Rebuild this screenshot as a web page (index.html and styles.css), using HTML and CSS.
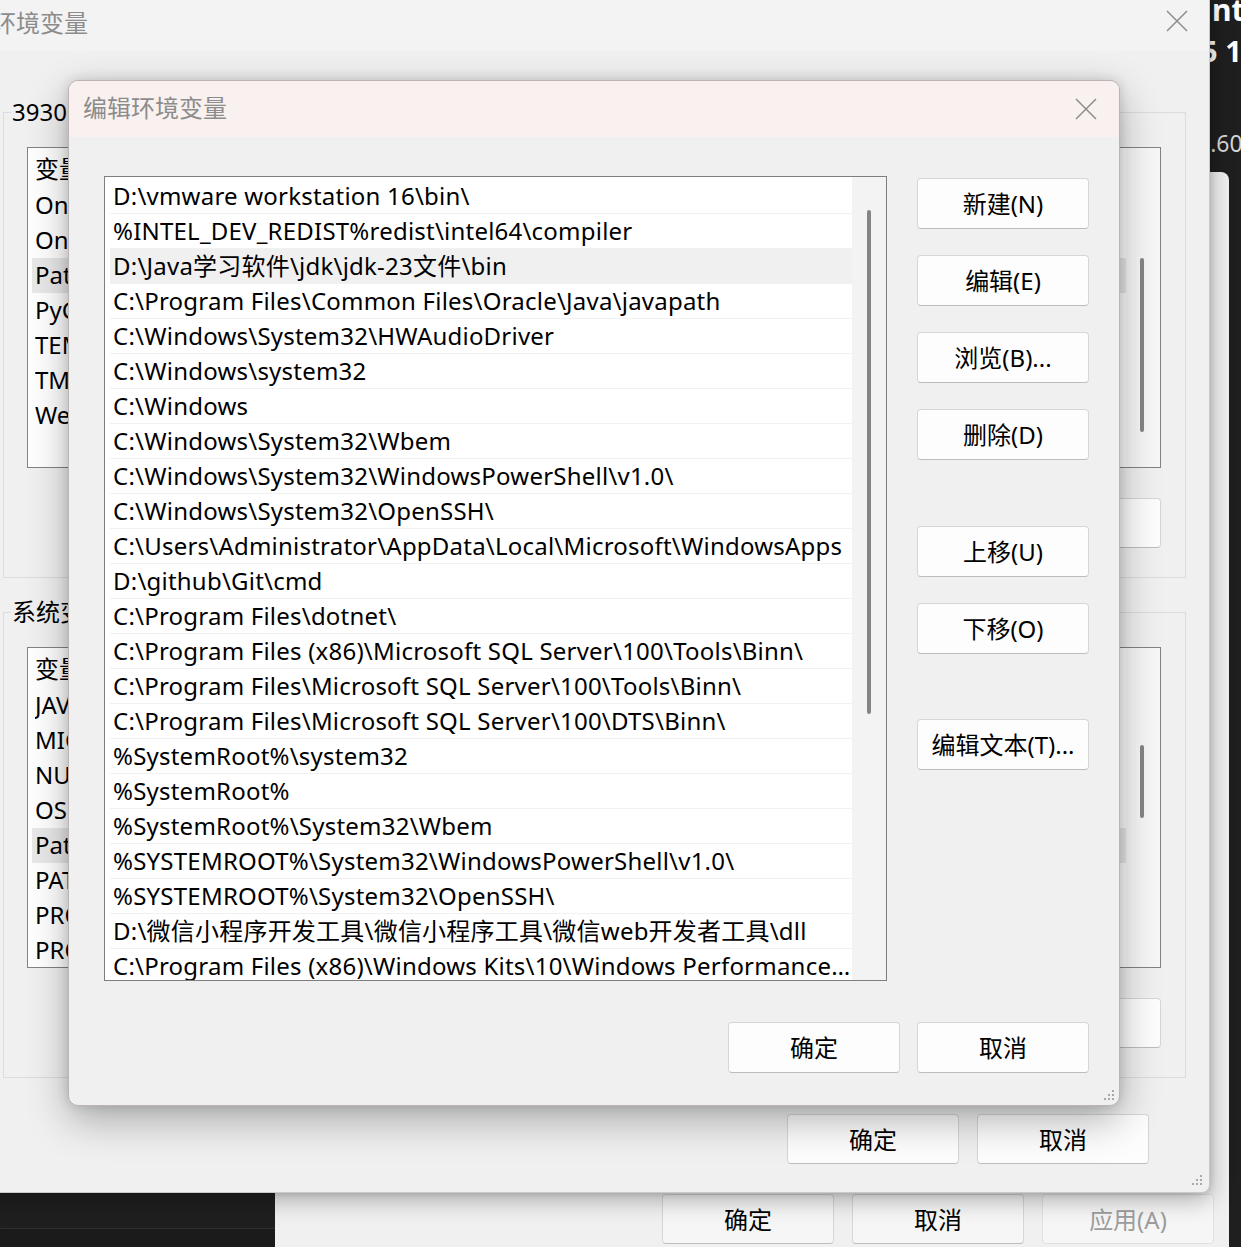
FILE: index.html
```html
<!DOCTYPE html>
<html lang="zh-CN">
<head>
<meta charset="utf-8">
<title>编辑环境变量</title>
<link rel="stylesheet" href="styles.css">
</head>
<body>
<div class="desktop">
  <div class="dark-app">
    <div class="dk-l1">nt</div>
    <div class="dk-l2">5 1</div>
    <div class="dk-l3">3.60</div>
  </div>
  <div class="dark-strip"></div>

  <div class="win-back">
    <div class="btn-row back-row">
      <div class="btn">确定</div>
      <div class="btn">取消</div>
      <div class="btn disabled">应用(A)</div>
    </div>
  </div>

  <div class="win-env">
    <div class="env-title">
      <span class="title-text">环境变量</span>
      <svg class="close" width="22" height="22" viewBox="0 0 22 22"><path d="M1 1L21 21M21 1L1 21" stroke="#8c8c8c" stroke-width="1.5" fill="none"/></svg>
    </div>
    <div class="env-body">
      <div class="group">
        <div class="group-label">3930 的用户变量(U)</div>
        <div class="vlist">
          <div class="vrows">
            <div class="vhead"><span class="vname">变量</span><span class="vval">值</span></div>
            <div class="vrow"><span class="vname">OneDrive</span><span class="vval">C:\Users\3930\OneDrive</span></div>
            <div class="vrow"><span class="vname">OneDriveConsumer</span><span class="vval">C:\Users\3930\OneDrive</span></div>
            <div class="vrow sel"><span class="vname">Path</span><span class="vval">C:\Users\3930\AppData\Local\Microsoft\WindowsApps;</span></div>
            <div class="vrow"><span class="vname">PyCharm Community Edition</span><span class="vval">D:\PyCharm\bin;</span></div>
            <div class="vrow"><span class="vname">TEMP</span><span class="vval">C:\Users\3930\AppData\Local\Temp</span></div>
            <div class="vrow"><span class="vname">TMP</span><span class="vval">C:\Users\3930\AppData\Local\Temp</span></div>
            <div class="vrow"><span class="vname">WebStorm</span><span class="vval">D:\WebStorm\bin;</span></div>
          </div>
          <div class="vscroll"><div class="vthumb thumb-u"></div></div>
        </div>
        <div class="btn-row group-row">
          <div class="btn">新建(N)...</div>
          <div class="btn">编辑(E)...</div>
          <div class="btn">删除(D)</div>
        </div>
      </div>

      <div class="group group-sys">
        <div class="group-label">系统变量(S)</div>
        <div class="vlist">
          <div class="vrows">
            <div class="vhead"><span class="vname">变量</span><span class="vval">值</span></div>
            <div class="vrow"><span class="vname">JAVA_HOME</span><span class="vval">D:\Java\jdk-23</span></div>
            <div class="vrow"><span class="vname">MIC_LD_LIBRARY_PATH</span><span class="vval">%INTEL_DEV_REDIST%compiler\lib\mic</span></div>
            <div class="vrow"><span class="vname">NUMBER_OF_PROCESSORS</span><span class="vval">16</span></div>
            <div class="vrow"><span class="vname">OS</span><span class="vval">Windows_NT</span></div>
            <div class="vrow sel"><span class="vname">Path</span><span class="vval">D:\vmware workstation 16\bin\;</span></div>
            <div class="vrow"><span class="vname">PATHEXT</span><span class="vval">.COM;.EXE;.BAT;.CMD;.VBS;.JS</span></div>
            <div class="vrow"><span class="vname">PROCESSOR_ARCHITECTURE</span><span class="vval">AMD64</span></div>
            <div class="vrow"><span class="vname">PROCESSOR_IDENTIFIER</span><span class="vval">Intel64 Family 6</span></div>
          </div>
          <div class="vscroll"><div class="vthumb thumb-s"></div></div>
        </div>
        <div class="btn-row group-row">
          <div class="btn">新建(W)...</div>
          <div class="btn">编辑(I)...</div>
          <div class="btn">删除(L)</div>
        </div>
      </div>

      <div class="btn-row env-foot">
        <div class="btn">确定</div>
        <div class="btn">取消</div>
      </div>
    </div>
    <svg class="grip" width="14" height="14" viewBox="0 0 14 14"><g fill="#a8a8a8"><rect x="11" y="3" width="2" height="2"/><rect x="7" y="7" width="2" height="2"/><rect x="11" y="7" width="2" height="2"/><rect x="3" y="11" width="2" height="2"/><rect x="7" y="11" width="2" height="2"/><rect x="11" y="11" width="2" height="2"/></g></svg>
  </div>

  <div class="dlg">
    <div class="dlg-title">
      <span class="title-text">编辑环境变量</span>
      <svg class="close dlg-close" width="22" height="22" viewBox="0 0 22 22"><path d="M1 1L21 21M21 1L1 21" stroke="#8c8c8c" stroke-width="1.5" fill="none"/></svg>
    </div>
    <div class="dlg-body">
      <div class="dlg-main">
        <div class="plist">
          <div class="prows">
            <div class="prow">D:\vmware workstation 16\bin\</div>
            <div class="prow">%INTEL_DEV_REDIST%redist\intel64\compiler</div>
            <div class="prow sel">D:\Java学习软件\jdk\jdk-23文件\bin</div>
            <div class="prow">C:\Program Files\Common Files\Oracle\Java\javapath</div>
            <div class="prow">C:\Windows\System32\HWAudioDriver</div>
            <div class="prow">C:\Windows\system32</div>
            <div class="prow">C:\Windows</div>
            <div class="prow">C:\Windows\System32\Wbem</div>
            <div class="prow">C:\Windows\System32\WindowsPowerShell\v1.0\</div>
            <div class="prow">C:\Windows\System32\OpenSSH\</div>
            <div class="prow">C:\Users\Administrator\AppData\Local\Microsoft\WindowsApps</div>
            <div class="prow">D:\github\Git\cmd</div>
            <div class="prow">C:\Program Files\dotnet\</div>
            <div class="prow">C:\Program Files (x86)\Microsoft SQL Server\100\Tools\Binn\</div>
            <div class="prow">C:\Program Files\Microsoft SQL Server\100\Tools\Binn\</div>
            <div class="prow">C:\Program Files\Microsoft SQL Server\100\DTS\Binn\</div>
            <div class="prow">%SystemRoot%\system32</div>
            <div class="prow">%SystemRoot%</div>
            <div class="prow">%SystemRoot%\System32\Wbem</div>
            <div class="prow">%SYSTEMROOT%\System32\WindowsPowerShell\v1.0\</div>
            <div class="prow">%SYSTEMROOT%\System32\OpenSSH\</div>
            <div class="prow">D:\微信小程序开发工具\微信小程序工具\微信web开发者工具\dll</div>
            <div class="prow">C:\Program Files (x86)\Windows Kits\10\Windows Performance Toolkit\</div>
          </div>
          <div class="pscroll"><div class="pthumb"></div></div>
        </div>
        <div class="side-btns">
          <div class="btn">新建(N)</div>
          <div class="btn">编辑(E)</div>
          <div class="btn">浏览(B)...</div>
          <div class="btn">删除(D)</div>
          <div class="btn gap-big">上移(U)</div>
          <div class="btn">下移(O)</div>
          <div class="btn gap-big2">编辑文本(T)...</div>
        </div>
      </div>
      <div class="btn-row dlg-foot">
        <div class="btn">确定</div>
        <div class="btn">取消</div>
      </div>
    </div>
    <svg class="grip dlg-grip" width="14" height="14" viewBox="0 0 14 14"><g fill="#a8a8a8"><rect x="11" y="3" width="2" height="2"/><rect x="7" y="7" width="2" height="2"/><rect x="11" y="7" width="2" height="2"/><rect x="3" y="11" width="2" height="2"/><rect x="7" y="11" width="2" height="2"/><rect x="11" y="11" width="2" height="2"/></g></svg>
  </div>
</div>
</body>
</html>
```
FILE: styles.css
```css
* { box-sizing: border-box; }
html, body { margin: 0; padding: 0; }
body {
  width: 1241px;
  height: 1247px;
  overflow: hidden;
  background: #1f1f1f;
  font-family: "Noto Sans", "Noto Sans CJK SC", sans-serif;
  font-size: 24px;
  color: #000;
}
.desktop {
  position: relative;
  width: 1241px;
  height: 1247px;
  overflow: hidden;
  background: #1f1f1f;
}

/* dark application behind */
.dark-app {
  position: absolute;
  left: 1195px;
  top: 0;
  width: 46px;
  height: 172px;
  display: flex;
  flex-direction: column;
  color: #fff;
  white-space: nowrap;
}
.dk-l1 { font-size: 30px; font-weight: 700; line-height: 30px; margin-top: -5px; padding-left: 17px; }
.dk-l2 { font-size: 29px; font-weight: 700; line-height: 30px; margin-top: 11px; padding-left: 6px; }
.dk-l3 { font-size: 23px; line-height: 23px; margin-top: 66px; padding-left: 2px; color: #d6d6d6; }
.dark-strip {
  position: absolute;
  left: 0;
  top: 1228px;
  width: 275px;
  height: 19px;
  background: #1b1b1b;
  border-top: 1px solid #2e2e2e;
}

/* buttons */
.btn {
  width: 172px;
  height: 51px;
  flex: none;
  display: flex;
  align-items: center;
  justify-content: center;
  padding-bottom: 2px;
  background: #fdfdfd;
  border: 1px solid #d6d6d6;
  border-bottom-color: #bdbdbd;
  border-radius: 4px;
  white-space: nowrap;
  color: #000;
}
.btn.disabled { color: #9d9d9d; background: #f5f5f5; border-color: #e2e2e2; }
.btn-row { display: flex; justify-content: flex-end; gap: 17px; }

/* back window */
.win-back {
  position: absolute;
  left: 275px;
  top: 172px;
  width: 954px;
  height: 1090px;
  background: #f0f0f0;
  border-radius: 8px;
  display: flex;
  flex-direction: column;
  justify-content: flex-end;
  padding: 0 15px 18px 0;
}
.back-row { gap: 18px; }
.back-row .btn { height: 50px; background: #f6f6f6; }

/* environment variables window */
.win-env {
  position: absolute;
  left: -20px;
  top: -10px;
  width: 1230px;
  height: 1203px;
  background: #f0f0f0;
  border: 1px solid #c9c9c9;
  border-radius: 8px;
  box-shadow: 0 6px 24px rgba(0,0,0,0.32), 0 0 6px rgba(0,0,0,0.15);
  display: flex;
  flex-direction: column;
}
.env-title {
  height: 60px;
  flex: none;
  display: flex;
  align-items: center;
  padding-left: 11px;
  background: #f3f3f3;
  border-radius: 8px 8px 0 0;
}
.title-text { color: #8c8c8c; white-space: nowrap; }
.close { margin-left: auto; margin-right: 21px; flex: none; }
.env-body {
  flex: 1;
  display: flex;
  flex-direction: column;
  padding: 61px 23px 0 22px;
}
.group {
  height: 466px;
  flex: none;
  border: 1px solid #dcdcdc;
  padding: 0 24px 29px 23px;
  display: flex;
  flex-direction: column;
}
.group-sys { margin-top: 34px; }
.group-label {
  align-self: flex-start;
  height: 34px;
  line-height: 34px;
  margin: -18px 0 0 -16px;
  padding: 0 1px;
  background: #f0f0f0;
  white-space: nowrap;
}
.vlist {
  height: 321px;
  flex: none;
  margin-top: 18px;
  border: 1px solid #838383;
  background: #fff;
  display: flex;
  overflow: hidden;
}
.vrows { flex: 1; min-width: 0; display: flex; flex-direction: column; padding-left: 4px; }
.vhead, .vrow {
  display: flex;
  flex: none;
  white-space: nowrap;
  padding-left: 3px;
  padding-right: 30px;
  overflow: hidden;
}
.vhead { height: 40px; line-height: 42px; }
.vrow { height: 35px; line-height: 34px; }
.vrow.sel { background: #e9e9e9; }
.vname { width: 420px; flex: none; overflow: hidden; }
.vval { flex: 1; min-width: 0; overflow: hidden; text-overflow: ellipsis; }
.vscroll { width: 34px; flex: none; background: #f7f7f7; }
.vthumb { width: 4px; margin-left: 14px; background: #858585; border-radius: 2px; }
.thumb-u { margin-top: 110px; height: 174px; }
.thumb-s { margin-top: 97px; height: 73px; }
.group-row { margin-top: 30px; }
.group-row .btn { height: 50px; }
.env-foot { margin-top: 36px; margin-right: 37px; gap: 18px; }
.env-foot .btn { height: 50px; }
.grip { position: absolute; right: 6px; bottom: 6px; }

/* edit dialog */
.dlg {
  position: absolute;
  left: 68px;
  top: 80px;
  width: 1052px;
  height: 1026px;
  background: #f0f0f0;
  border: 1px solid #bcb4b2;
  border-radius: 10px;
  box-shadow: 0 14px 40px rgba(0,0,0,0.30), 0 0 12px rgba(0,0,0,0.14);
  overflow: hidden;
  display: flex;
  flex-direction: column;
}
.dlg-title {
  height: 56px;
  flex: none;
  display: flex;
  align-items: center;
  padding-left: 14px;
  padding-bottom: 5px;
  background: #f9f1ef;
}
.dlg-close { margin-right: 22px; margin-top: 5px; }
.dlg-body {
  flex: 1;
  display: flex;
  flex-direction: column;
  padding: 39px 30px 0 35px;
}
.dlg-main { display: flex; gap: 30px; }
.plist {
  width: 783px;
  height: 805px;
  flex: none;
  border: 1px solid #7e7e7e;
  background: #fff;
  display: flex;
  overflow: hidden;
}
.prows { flex: 1; min-width: 0; display: flex; flex-direction: column; padding-top: 2px; }
.prow {
  height: 35px;
  flex: none;
  line-height: 34px;
  margin-left: 5px;
  padding-left: 3px;
  border-bottom: 1px solid #f1f1f1;
  white-space: nowrap;
  overflow: hidden;
  text-overflow: ellipsis;
  letter-spacing: 0.22px;
}
.prow.sel { background: #f0f0f0; }
.pscroll { width: 34px; flex: none; background: #f3f3f3; }
.pthumb { width: 4px; height: 504px; margin: 33px 0 0 15px; background: #858585; border-radius: 2px; }
.side-btns { display: flex; flex-direction: column; gap: 26px; padding-top: 2px; }
.side-btns .gap-big { margin-top: 40px; }
.side-btns .gap-big2 { margin-top: 39px; }
.dlg-foot { margin-top: 41px; }
.dlg-grip { right: 4px; bottom: 4px; }
```
